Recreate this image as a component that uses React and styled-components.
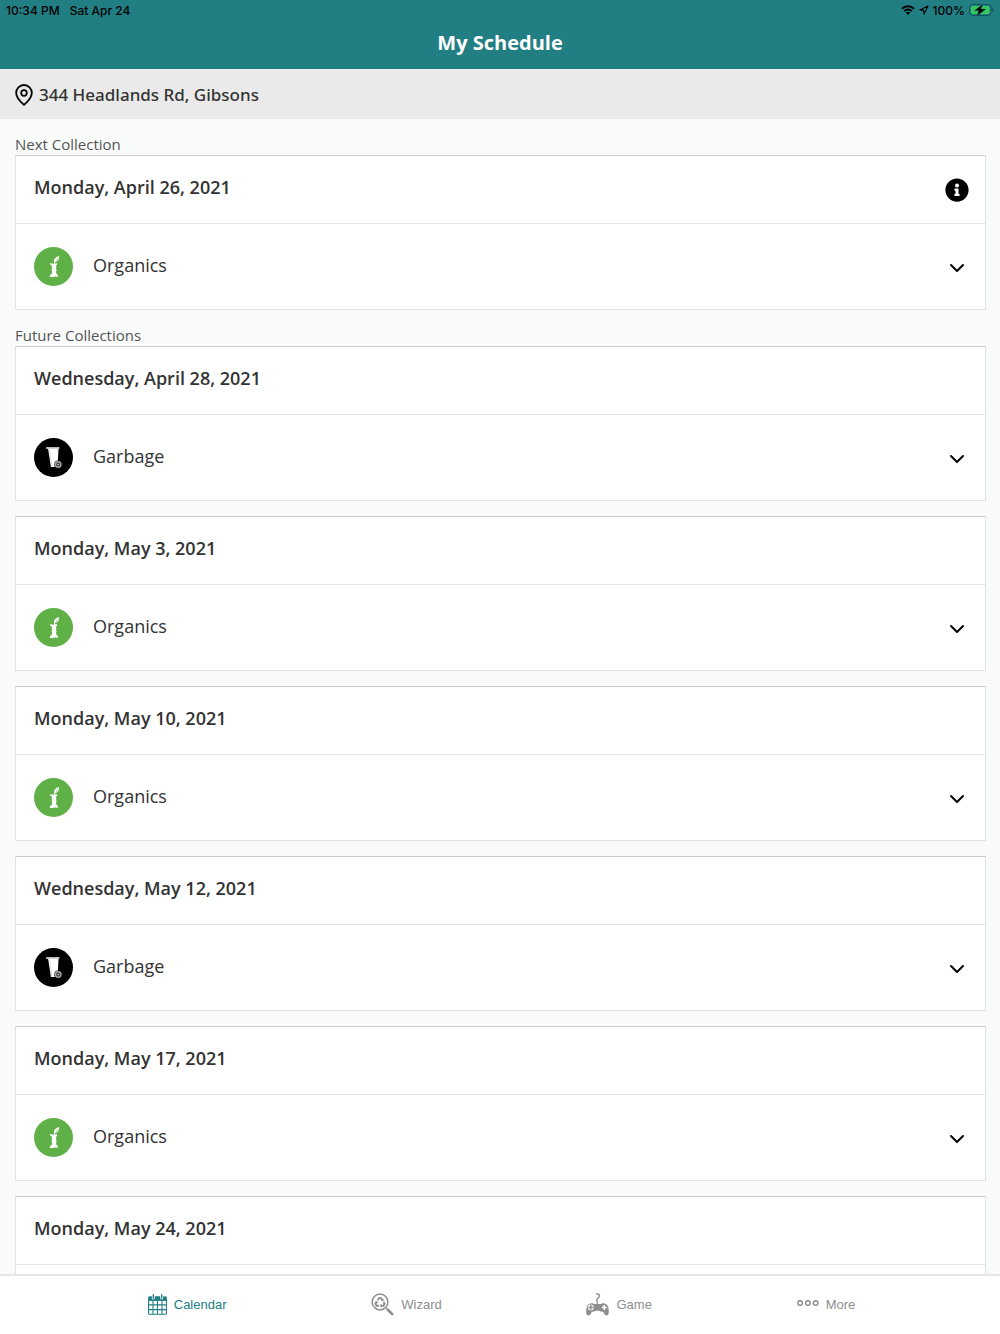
import React, { useState } from "react";
import styled, { createGlobalStyle } from "styled-components";
import { FaInfoCircle } from "react-icons/fa";

const collections = [
  { date: "Wednesday, April 28, 2021", type: "Garbage" },
  { date: "Monday, May 3, 2021", type: "Organics" },
  { date: "Monday, May 10, 2021", type: "Organics" },
  { date: "Wednesday, May 12, 2021", type: "Garbage" },
  { date: "Monday, May 17, 2021", type: "Organics" },
  { date: "Monday, May 24, 2021", type: "Organics" },
];

/* icons */
const WifiIcon = () => (
  <svg width="14" height="10" viewBox="0 0 14 10" aria-hidden="true">
    <g fill="none" stroke="#000" strokeWidth="1.9">
      <path d="M.9 3.7a8.7 8.7 0 0 1 12.2 0" />
      <path d="M3.2 6.1a5.4 5.4 0 0 1 7.6 0" />
    </g>
    <path d="M7 10 4.9 7.8a3 3 0 0 1 4.2 0z" />
  </svg>
);

const LocationIcon = () => (
  <svg width="10" height="10" viewBox="0 0 10 10" aria-hidden="true">
    <path
      d="M9 1 .9 4.9l3.7.5.5 3.7z"
      fill="none"
      stroke="#000"
      strokeWidth="1.1"
      strokeLinejoin="round"
    />
  </svg>
);

const BatteryIcon = () => (
  <svg width="25" height="12" viewBox="0 0 25 12" aria-hidden="true">
    <rect x=".5" y=".5" width="21.6" height="11" rx="3.2" fill="none" stroke="#145458" />
    <rect x="2" y="2" width="18.6" height="8" rx="1.9" fill="#34c759" />
    <path d="M23.400 4v4c1.700-.6 1.700-3.400 0-4z" fill="#145458" />
    <path
      d="M13.800.2 5.200 6.700h4.300L8 11.900l9-6.800h-4.900z"
      stroke="#217e83"
      strokeWidth=".4"
    />
  </svg>
);

const PinIcon = () => (
  <svg width="18" height="22" viewBox="0 0 18 22" aria-hidden="true">
    <g fill="none" stroke="#000" strokeWidth="1.8">
      <path d="M9 1a7.8 7.8 0 0 0-7.8 7.9C1.2 14 5.4 17.600 9 20.800c3.600-3.200 7.800-6.800 7.800-11.900A7.800 7.800 0 0 0 9 1z" />
      <circle cx="9" cy="9" r="2.8" />
    </g>
  </svg>
);

const ChevronIcon = () => (
  <svg width="24" height="24" viewBox="0 0 24 24" aria-hidden="true">
    <path
      d="m6 10 6 6 6-6"
      fill="none"
      stroke="#000"
      strokeWidth="2"
      strokeLinecap="round"
      strokeLinejoin="round"
    />
  </svg>
);

const OrganicsIcon = () => (
  <svg width="39" height="39" viewBox="0 0 39 39" aria-hidden="true">
    <circle cx="19.5" cy="19.5" r="19.5" fill="#5fb046" />
    <g fill="#fff">
      <path d="M20.100 15.600c-.6-3 1.200-5.600 4.900-6.500.6 3.300-1.100 5.500-3.900 6.200l-.2 1.200h-.9z" />
      <path d="M15.800 16.300c1.200-.5 2.500.6 3.800.3 1.300-.3 2.300-.6 3.500 0 .5 1.300-.6 1.900-1.200 2.600l.5 1.300-.4 1.300.6 1.400-.5 1.400.2 1.900c.7.900 2 1.400 1.900 3-1.300.6-2.500-.1-3.900.2-1.600.3-3 .4-4.600 0 0-1.700 1.400-2.200 2.200-3.200l.2-1.700-.6-1.500.6-1.500-.5-1.300.5-1.500c-.9-.7-2.300-1.300-2.300-2.700z" />
    </g>
    <path d="m22 14.500 2-3.600" stroke="#5fb046" strokeWidth=".5" />
  </svg>
);

const GarbageIcon = () => (
  <svg width="39" height="39" viewBox="0 0 39 39" aria-hidden="true">
    <circle cx="19.5" cy="19.5" r="19.5" />
    <path d="M12.300 9.200h13v1.500h-.8L23.600 29h-6.700l-2.800-18.200h-1.800z" fill="#fff" />
    <path d="M12.300 9.200h13v1.400h-13z" fill="#b9b9b9" />
    <path d="m15.500 12 2.200 16" stroke="#ccc" strokeWidth=".7" />
    <circle cx="24.2" cy="26.5" r="3.9" fill="#000" />
    <circle cx="24.2" cy="26.5" r="2.7" fill="#222" stroke="#a8a8a8" strokeWidth="1.5" />
    <circle cx="24.2" cy="26.5" r="1.1" fill="#bdbdbd" />
  </svg>
);

const CalendarIcon = () => (
  <svg width="19" height="21" viewBox="0 0 19 21" aria-hidden="true">
    <path
      d="M.6 6.200h17.800v13.100a1 1 0 0 1-1 1H1.600a1 1 0 0 1-1-1zM5 7v13M9.500 7v13M14 7v13M1 10.900h17M1 15.600h17"
      fill="none"
      stroke="currentColor"
      strokeWidth="1.1"
    />
    <path
      d="M1.600 2.200h2.200v1.900a1.500 1.500 0 0 0 3 0V2.200h5.400v1.900a1.500 1.500 0 0 0 3 0V2.200h2.200a1.500 1.500 0 0 1 1.500 1.500v3H.1v-3a1.500 1.500 0 0 1 1.500-1.500z"
      fill="currentColor"
    />
    <path
      d="M5.300.6v3.600M13.700.6v3.600"
      stroke="currentColor"
      strokeWidth="1.3"
      strokeLinecap="round"
    />
  </svg>
);

const WizardIcon = () => (
  <svg width="23" height="23" viewBox="0 0 23 23" aria-hidden="true">
    <circle cx="9" cy="9" r="7.9" fill="none" stroke="currentColor" strokeWidth="1.5" />
    <path
      d="m16.800 16.800 4.400 4.300"
      stroke="currentColor"
      strokeWidth="2.6"
      strokeLinecap="round"
    />
    <path d="m14.700 14.700 2.200 2.200" stroke="currentColor" strokeWidth="1.2" />
    <g fill="none" stroke="currentColor" strokeWidth="1.9">
      <path d="M6.700 7.200 8 5.100h2.100l1.200 2" />
      <path d="m12.500 8.900 1.100 1.900-1.100 1.900h-2.400" />
      <path d="M7.900 12.700H5.500l-1.100-1.900 1.200-2" />
    </g>
    <g fill="currentColor">
      <path d="m12.900 5.700-.5 2.800-2.700-1z" />
      <path d="m10.500 10.700-2 2 2 2z" />
      <path d="m3.600 8.900 2.700-1 .6 2.800z" />
    </g>
  </svg>
);

const GameIcon = () => (
  <svg width="23" height="23" viewBox="0 0 23 23" aria-hidden="true">
    <path
      d="M10.300.8c2.300.1 3.400 1.300 3.200 2.500-.3 1.700-2.800 1.900-2.700 3.700 0 1 .7 1.500.7 3.700"
      fill="none"
      stroke="currentColor"
      strokeWidth="1.4"
    />
    <path
      d="M5 10.200c1.500-.2 2.600.3 3.500.7h6c.9-.4 2-.9 3.500-.7 2.900.4 4.200 2.700 4.600 5.600.4 2.700.5 6.200-1.700 6.600-2.200.3-3-1.900-3.800-3.900-1.300.6-2.700.3-3.500-.8H9.400c-.8 1.100-2.200 1.400-3.500.8-.8 2-1.600 4.200-3.800 3.900C-.1 22-.1 18.500.4 15.800.9 12.900 2.100 10.600 5 10.200z"
      fill="currentColor"
    />
    <circle cx="4.8" cy="14.4" r="2.9" fill="#fff" />
    <path d="M4.800 12v4.800M2.400 14.400h4.800" stroke="currentColor" strokeWidth="1.5" />
    <path d="M18.300 11.900v5M15.800 14.400h5" stroke="#fff" strokeWidth="1.5" />
  </svg>
);

const MoreIcon = () => (
  <svg width="22" height="8" viewBox="0 0 22 8" aria-hidden="true">
    <g fill="none" stroke="currentColor" strokeWidth="1.5">
      <circle cx="3.1" cy="3" r="2.3" />
      <circle cx="10.9" cy="3" r="2.3" />
      <circle cx="18.7" cy="3" r="2.3" />
    </g>
  </svg>
);

const tabs = [
  { name: "Calendar", icon: <CalendarIcon /> },
  { name: "Wizard", icon: <WizardIcon /> },
  { name: "Game", icon: <GameIcon /> },
  { name: "More", icon: <MoreIcon /> },
];

const Collection = ({ date, type, info }) => {
  return (
    <Card>
      <CardHead>
        <CardDate>{date}</CardDate>
        {info && (
          <InfoButton aria-label="Collection info">
            <FaInfoCircle size={24} />
          </InfoButton>
        )}
      </CardHead>
      <CardRow aria-label={`${type}, ${date}`}>
        {type === "Garbage" ? <GarbageIcon /> : <OrganicsIcon />}
        <TypeName>{type}</TypeName>
        <ChevronIcon />
      </CardRow>
    </Card>
  );
};

const App = () => {
  const [tab, setTab] = useState("Calendar");

  return (
    <Container>
      <GlobalStyle />
      <Header>
        <StatusBar>
          <span>10:34 PM</span>
          <span>Sat Apr 24</span>
          <StatusRight>
            <WifiIcon />
            <LocationIcon />
            <span>100%</span>
            <BatteryIcon />
          </StatusRight>
        </StatusBar>
        <Title>My Schedule</Title>
      </Header>

      <AddressBar>
        <PinIcon />
        <Address>344 Headlands Rd, Gibsons</Address>
      </AddressBar>

      <Content>
        <Section>
          <SectionTitle>Next Collection</SectionTitle>
          <Collection date="Monday, April 26, 2021" type="Organics" info />
        </Section>
        <Section>
          <SectionTitle>Future Collections</SectionTitle>
          <List>
            {collections.map((item) => (
              <Collection key={item.date} {...item} />
            ))}
          </List>
        </Section>
      </Content>

      <TabBar>
        {tabs.map(({ name, icon }) => (
          <Tab key={name} $active={tab === name} onClick={() => setTab(name)}>
            {icon}
            <span>{name}</span>
          </Tab>
        ))}
      </TabBar>
    </Container>
  );
};

const GlobalStyle = createGlobalStyle`
  * {
    box-sizing: border-box;
  }

  body {
    margin: 0;
    font-family: "Open Sans", "Noto Sans", sans-serif;
    color: #333;
  }

  button {
    margin: 0;
    padding: 0;
    border: none;
    background: none;
    color: inherit;
    font: inherit;
    cursor: pointer;
  }

  svg {
    display: block;
    flex-shrink: 0;
  }
`;

const Container = styled.div`
  display: flex;
  flex-direction: column;
  height: 100vh;
  background: #f9fbfa;
`;

const Header = styled.header`
  flex-shrink: 0;
  padding-bottom: 12px;
  background: #217e83;
`;

const StatusBar = styled.div`
  display: flex;
  align-items: center;
  gap: 10px;
  height: 20px;
  padding: 0 6px;
  font-family: Inter, sans-serif;
  font-size: 12px;
  font-weight: 500;
  color: #000;
`;

const StatusRight = styled.div`
  display: flex;
  align-items: center;
  gap: 4px;
  margin-left: auto;
`;

const Title = styled.h1`
  margin: 0;
  padding-top: 9px;
  font-size: 20px;
  line-height: 28px;
  font-weight: 700;
  text-align: center;
  color: #fff;
`;

const AddressBar = styled.div`
  display: flex;
  flex-shrink: 0;
  align-items: center;
  gap: 6px;
  height: 50px;
  padding: 2px 15px 0;
  background: #eaeaea;
`;

const Address = styled.span`
  font-family: "Noto Sans", sans-serif;
  font-size: 17px;
  line-height: 24px;
  font-weight: 500;
`;

const Content = styled.main`
  flex: 1;
  min-height: 0;
  overflow-y: auto;
  scrollbar-width: none;
  padding: 0 14px 0 15px;
`;

const Section = styled.section`
  padding-top: 14px;
`;

const SectionTitle = styled.h2`
  margin: 0;
  font-size: 15px;
  line-height: 22px;
  font-weight: 400;
  color: #555;
`;

const List = styled.div`
  display: grid;
  gap: 15px;
`;

const Card = styled.article`
  border: 1px solid #dfe3e2;
  border-top-color: #c8cccb;
  background: #fff;
`;

const CardHead = styled.div`
  display: flex;
  align-items: center;
  justify-content: space-between;
  height: 68px;
  padding: 0 16px 0 18px;
  border-bottom: 1px solid #e2e4e3;
`;

const CardDate = styled.h3`
  margin: 0;
  padding-bottom: 6px;
  font-size: 18px;
  line-height: 24px;
  font-weight: 600;
`;

const InfoButton = styled.button`
  color: #000;
`;

const CardRow = styled.button`
  display: flex;
  align-items: center;
  gap: 20px;
  width: 100%;
  height: 85px;
  padding: 0 16px 0 18px;
  text-align: left;
`;

const TypeName = styled.span`
  flex: 1;
  padding-bottom: 4px;
  font-size: 18px;
  line-height: 24px;
`;

const TabBar = styled.nav`
  display: flex;
  flex-shrink: 0;
  justify-content: space-evenly;
  height: 60px;
  padding: 0 0 2px 3px;
  border-top: 2px solid #e4e5e5;
  background: #fff;
`;

const Tab = styled.button`
  display: flex;
  align-items: center;
  gap: 7px;
  font-family: "Liberation Sans", Arial, sans-serif;
  font-size: 13px;
  color: ${(props) => (props.$active ? "#217e83" : "#8e8e8e")};
`;

export default App;
